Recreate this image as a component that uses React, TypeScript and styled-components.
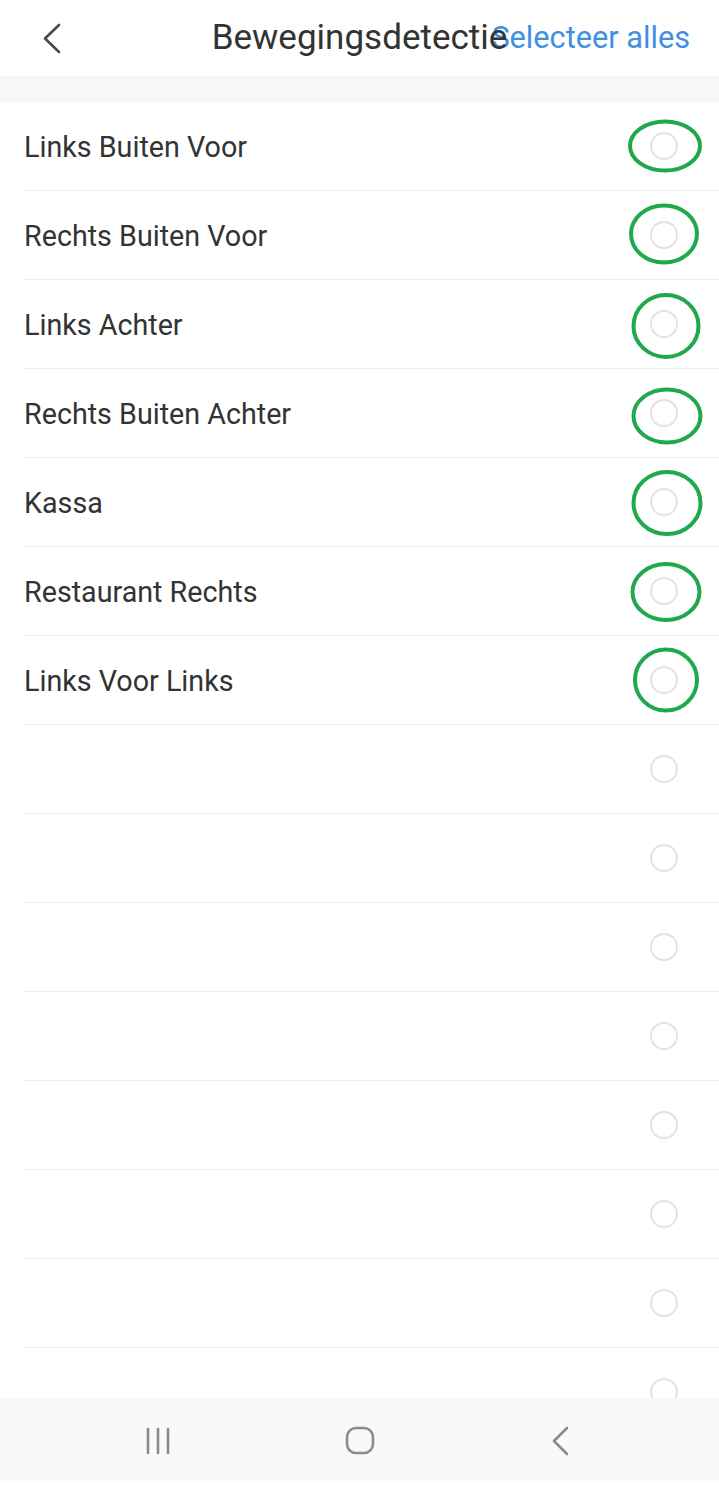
import * as React from 'react';
import styled, { createGlobalStyle } from 'styled-components';

const GlobalStyle = createGlobalStyle`
  html, body {
    margin: 0;
    padding: 0;
    background: #ffffff;
  }
  * {
    box-sizing: border-box;
  }
`;

type Mark = { dx: number; dy: number; rx: number; ry: number };

type Zone = { name: string; mark?: Mark };

const zones: Zone[] = [
  { name: 'Links Buiten Voor', mark: { dx: 0.5, dy: -0.5, rx: 35, ry: 24.5 } },
  { name: 'Rechts Buiten Voor', mark: { dx: 0, dy: -1.5, rx: 33, ry: 28.5 } },
  { name: 'Links Achter', mark: { dx: 1.5, dy: 2, rx: 32.5, ry: 31 } },
  { name: 'Rechts Buiten Achter', mark: { dx: 2.5, dy: 3, rx: 33.5, ry: 26.5 } },
  { name: 'Kassa', mark: { dx: 2.5, dy: 1, rx: 33.5, ry: 31 } },
  { name: 'Restaurant Rechts', mark: { dx: 1.5, dy: 1, rx: 33.5, ry: 28 } },
  { name: 'Links Voor Links', mark: { dx: 2, dy: 0, rx: 31, ry: 30.5 } },
  { name: '' },
  { name: '' },
  { name: '' },
  { name: '' },
  { name: '' },
  { name: '' },
  { name: '' },
  { name: '' },
];

const Screen = styled.div`
  height: 100vh;
  display: flex;
  flex-direction: column;
  font-family: Roboto, 'Liberation Sans', sans-serif;
  color: #333333;
  background: #ffffff;
`;

const Header = styled.div`
  height: 76px;
  flex-shrink: 0;
  display: grid;
  grid-template-areas: 'bar';
  align-items: center;
  padding: 0 29px 0 40px;
  background: #ffffff;
`;

const BackButton = styled.div`
  grid-area: bar;
  justify-self: start;
  display: flex;
  align-items: center;
  height: 40px;
  cursor: pointer;
`;

const Title = styled.div`
  grid-area: bar;
  justify-self: center;
  margin-left: -11px;
  font-size: 35px;
  color: #333333;
  z-index: 1;
  padding-bottom: 2px;
`;

const SelectAll = styled.div`
  grid-area: bar;
  justify-self: end;
  font-size: 30.7px;
  color: #3f8fe2;
  cursor: pointer;
  padding-bottom: 2px;
`;

const Spacer = styled.div`
  height: 26px;
  flex-shrink: 0;
  background: #f7f7f7;
`;

const List = styled.div`
  flex: 1;
  overflow: hidden;
`;

const Row = styled.div`
  height: 89px;
  margin-left: 24px;
  padding-right: 41px;
  display: flex;
  align-items: center;
  justify-content: space-between;
  border-bottom: 1px solid #ececec;
`;

const Label = styled.div`
  font-size: 28.7px;
  color: #333333;
  padding-top: 1px;
`;

const Radio = styled.div`
  position: relative;
  width: 28px;
  height: 28px;
  border: 2px solid #e3e3e3;
  border-radius: 50%;
`;

const Annotation = styled.svg<{ $dx: number; $dy: number }>`
  position: absolute;
  width: 90px;
  height: 90px;
  left: ${(p) => 12 - 45 + p.$dx}px;
  top: ${(p) => 12 - 45 + p.$dy}px;
  overflow: visible;
  pointer-events: none;
`;

const NavBar = styled.div`
  height: 83px;
  flex-shrink: 0;
  display: grid;
  grid-template-columns: repeat(3, 201px);
  justify-content: center;
  align-items: center;
  background: #f9f9f9;
`;

const NavButton = styled.div`
  display: flex;
  justify-content: center;
  align-items: center;
  padding-top: 2px;
`;

const BottomEdge = styled.div`
  height: 8px;
  flex-shrink: 0;
  background: #ffffff;
`;

const ZoneRow = ({ zone }: { zone: Zone }) => (
  <Row>
    <Label>{zone.name}</Label>
    <Radio>
      {zone.mark && (
        <Annotation $dx={zone.mark.dx} $dy={zone.mark.dy} viewBox="0 0 90 90">
          <ellipse
            cx="45"
            cy="45"
            rx={zone.mark.rx}
            ry={zone.mark.ry}
            fill="none"
            stroke="#1fa94a"
            strokeWidth="4"
          />
        </Annotation>
      )}
    </Radio>
  </Row>
);

export default function App() {
  return (
    <Screen>
      <GlobalStyle />
      <Header>
        <BackButton>
          <svg width="24" height="32" viewBox="0 0 24 32">
            <path
              d="M19 3 L5 16.5 L19 30"
              fill="none"
              stroke="#4a4a4a"
              strokeWidth="2.6"
              strokeLinecap="round"
              strokeLinejoin="round"
            />
          </svg>
        </BackButton>
        <SelectAll>Selecteer alles</SelectAll>
        <Title>Bewegingsdetectie</Title>
      </Header>
      <Spacer />
      <List>
        {zones.map((zone, i) => (
          <ZoneRow key={i} zone={zone} />
        ))}
      </List>
      <NavBar>
        <NavButton>
          <svg width="30" height="28" viewBox="0 0 30 28">
            <path
              d="M4 2 V26 M14 2 V26 M24 2 V26"
              stroke="#8a8a8a"
              strokeWidth="2.6"
              strokeLinecap="round"
            />
          </svg>
        </NavButton>
        <NavButton>
          <svg width="30" height="30" viewBox="0 0 30 30">
            <rect
              x="2"
              y="2"
              width="26"
              height="25"
              rx="9"
              fill="none"
              stroke="#8a8a8a"
              strokeWidth="2.6"
            />
          </svg>
        </NavButton>
        <NavButton>
          <svg width="22" height="30" viewBox="0 0 22 30">
            <path
              d="M17 2 L4 15 L17 28"
              fill="none"
              stroke="#8a8a8a"
              strokeWidth="2.6"
              strokeLinecap="round"
              strokeLinejoin="round"
            />
          </svg>
        </NavButton>
      </NavBar>
      <BottomEdge />
    </Screen>
  );
}
